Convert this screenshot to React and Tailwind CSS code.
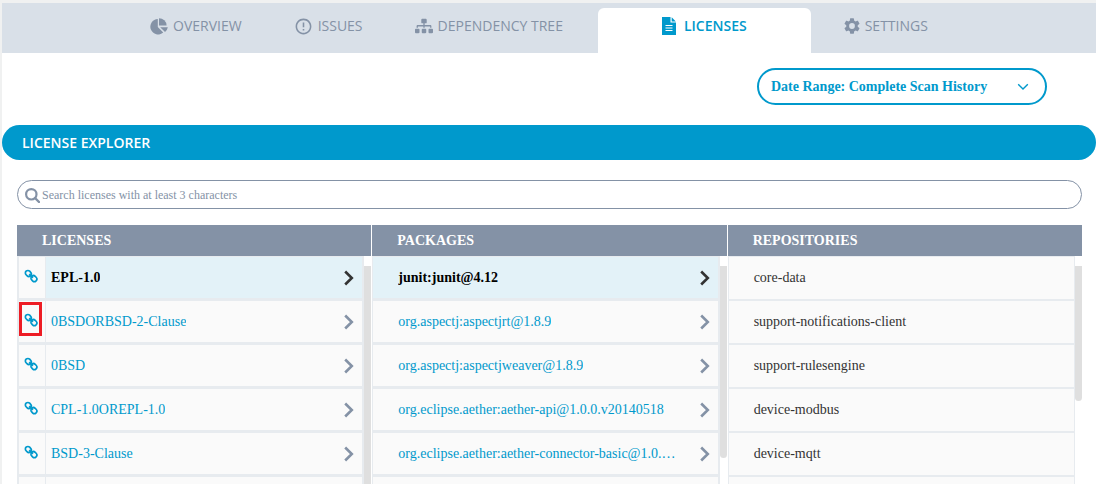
import { useState } from "react";
import { FaSitemap } from "react-icons/fa";
import { MdErrorOutline } from "react-icons/md";

function PieIcon() {
  return (
    <svg viewBox="0 0 18 17" className="h-[17px] w-[18px]" fill="currentColor" aria-hidden="true">
      <path d="M7.8 1V9L13.2 14.4A7.7 7.7 0 1 1 7.8 1Z" />
      <path d="M9 0.2A7.6 7.6 0 0 1 16.6 7.6H9Z" />
      <path d="M10.2 9.2H17.8A7.6 7.6 0 0 1 15 14Z" />
    </svg>
  );
}

function GearIcon() {
  return (
    <svg viewBox="2.2 2 19.6 20" className="size-4" fill="currentColor" aria-hidden="true">
      <path d="M19.14 12.94c.04-.3.06-.61.06-.94 0-.32-.02-.64-.07-.94l2.03-1.58a.49.49 0 0 0 .12-.61l-1.92-3.32a.488.488 0 0 0-.59-.22l-2.39.96c-.5-.38-1.03-.7-1.62-.94l-.36-2.54a.484.484 0 0 0-.48-.41h-3.84c-.24 0-.43.17-.47.41l-.36 2.54c-.59.24-1.13.57-1.62.94l-2.39-.96a.488.488 0 0 0-.59.22L2.74 8.87c-.12.21-.08.47.12.61l2.03 1.58c-.05.3-.09.63-.09.94s.02.64.07.94l-2.03 1.58a.49.49 0 0 0-.12.61l1.92 3.32c.12.22.37.29.59.22l2.39-.96c.5.38 1.03.7 1.62.94l.36 2.54c.05.24.24.41.48.41h3.84c.24 0 .44-.17.47-.41l.36-2.54c.59-.24 1.13-.56 1.62-.94l2.39.96c.22.08.47 0 .59-.22l1.92-3.32a.49.49 0 0 0-.12-.61zM12 15.6A3.6 3.6 0 1 1 12 8.4a3.6 3.6 0 0 1 0 7.2z" />
    </svg>
  );
}

function DocumentIcon() {
  return (
    <svg viewBox="0 0 14 18" className="h-[18px] w-[14px]" fill="currentColor" aria-hidden="true">
      <path d="M0 0H8.5V5.5H14V18H0Z" />
      <path d="M9.7 0.3L13.8 4.4H9.7Z" />
      <path d="M3.5 8.5H10.5M3.5 11H10.5M3.5 13.5H10.5" stroke="white" strokeWidth="1.1" />
    </svg>
  );
}

function SearchIcon() {
  return (
    <svg viewBox="0 0 15 15" className="mt-[2px] size-[15px] shrink-0" fill="none" stroke="currentColor" aria-hidden="true">
      <circle cx="6.3" cy="6.3" r="5.2" strokeWidth="2.2" />
      <path d="M10 10L14 14" strokeWidth="2.4" strokeLinecap="round" />
    </svg>
  );
}

function LinkIcon() {
  return (
    <svg viewBox="0 0 14 14" className="size-[14px]" fill="none" stroke="currentColor" strokeWidth="1.7" aria-hidden="true">
      <rect x="1.2" y="1.9" width="6.2" height="5" rx="2.5" transform="rotate(45 4.3 4.4)" />
      <rect x="6.8" y="7.1" width="6.2" height="5" rx="2.5" transform="rotate(45 9.9 9.6)" />
      <path d="M5.2 5.2L8.9 8.8" />
    </svg>
  );
}

function Chevron() {
  return (
    <svg viewBox="0 0 10 16" className="h-4 w-[10px] shrink-0" fill="none" stroke="currentColor" strokeWidth="2.6" aria-hidden="true">
      <path d="M1.2 1.5L7.8 8L1.2 14.5" />
    </svg>
  );
}

const tabs = [
  { name: "OVERVIEW", icon: <PieIcon /> },
  { name: "ISSUES", icon: <MdErrorOutline size={19} /> },
  { name: "DEPENDENCY TREE", icon: <FaSitemap size={18} /> },
  { name: "LICENSES", icon: <DocumentIcon />, active: true },
  { name: "SETTINGS", icon: <GearIcon /> },
];

const licenses = ["EPL-1.0", "0BSDORBSD-2-Clause", "0BSD", "CPL-1.0OREPL-1.0", "BSD-3-Clause", ""];
const packages = [
  "junit:junit@4.12",
  "org.aspectj:aspectjrt@1.8.9",
  "org.aspectj:aspectjweaver@1.8.9",
  "org.eclipse.aether:aether-api@1.0.0.v20140518",
  "org.eclipse.aether:aether-connector-basic@1.0.…",
  "",
];
const repositories = ["core-data", "support-notifications-client", "support-rulesengine", "device-modbus", "device-mqtt", ""];

function Column({ title, thumb, children }) {
  return (
    <section className="flex min-w-0 flex-1 flex-col">
      <h3 className="h-[31px] shrink-0 bg-[#8492a6] pl-[25px] text-sm leading-[31px] font-bold text-white">{title}</h3>
      <div className="flex min-h-0 flex-1 overflow-hidden">
        <ul className="min-w-0 flex-1">{children}</ul>
        <div className="w-[7px] shrink-0 pt-[10px]">
          <div className={`rounded-b bg-[#dfdfdf] ${thumb}`} />
        </div>
      </div>
    </section>
  );
}

function SelectRow({ label, selected, onSelect, link, marked }) {
  return (
    <li className={`flex h-11 border-t border-r-2 border-b-2 border-[#e7ebef] bg-[#fafafa] ${link ? "border-l-2" : "border-l"}`}>
      {link && (
        <div className="flex w-[27px] shrink-0 items-start border-r border-[#e7ebef]">
          <a
            href="#license"
            aria-label={`Open ${label}`}
            className={`mt-px flex h-[34px] w-[23px] items-center justify-center border-3 pt-[2px] text-[#0099cc] ${marked ? "border-[#ed1c24]" : "border-transparent"}`}
          >
            <LinkIcon />
          </a>
        </div>
      )}
      <button
        type="button"
        onClick={onSelect}
        className={`flex min-w-0 flex-1 items-center justify-between pr-2 text-left text-sm ${link ? "pl-[5px]" : "pl-[25px]"} ${selected ? "bg-[#e3f2f8] font-bold text-black" : "text-[#0099cc]"}`}
      >
        <span className="truncate">{label}</span>
        <span className={selected ? "text-[#333333]" : "text-[#8492a6]"}>
          <Chevron />
        </span>
      </button>
    </li>
  );
}

export default function App() {
  const [license, setLicense] = useState(0);
  const [pkg, setPkg] = useState(0);

  return (
    <div className="flex h-screen flex-col overflow-hidden border-t-3 border-l-2 border-[#f0f1f1] bg-white font-['Liberation_Serif',serif]">
      <nav className="flex h-[50px] shrink-0 bg-[#d9e0e8] pl-[122px] font-['Open_Sans',sans-serif] text-sm">
        {tabs.map((tab) => (
          <a
            key={tab.name}
            href="#tab"
            className={`flex items-center whitespace-nowrap ${tab.active ? "mr-[7px] ml-[9px] mt-[5px] gap-2 rounded-t-md bg-white px-[64px] pb-[9px] font-semibold text-[#0099cc]" : "gap-[5px] px-[26px] pb-1 text-[#8492a6]"}`}
          >
            {tab.icon}
            {tab.name}
          </a>
        ))}
      </nav>

      <div className="flex shrink-0 justify-end pt-[15px] pr-[49px] pb-5">
        <button type="button" className="flex h-[37px] w-[290px] items-center justify-between rounded-full border-2 border-[#0099cc] pr-4 pl-3 text-sm font-bold text-[#0099cc]">
          Date Range: Complete Scan History
          <svg viewBox="0 0 12 8" className="h-2 w-3" fill="none" stroke="currentColor" strokeWidth="1.4" aria-hidden="true">
            <path d="M1.2 1.2L6 6L10.8 1.2" />
          </svg>
        </button>
      </div>

      <h2 className="h-[35px] shrink-0 rounded-full bg-[#0099cc] pl-5 font-['Open_Sans',sans-serif] text-sm leading-[35px] font-semibold text-white">
        LICENSE EXPLORER
      </h2>

      <main className="flex min-h-0 flex-1 flex-col pt-5 pr-[14px] pl-[15px]">
        <label className="flex h-[29px] shrink-0 items-center gap-[2px] rounded-full border border-[#8492a6] pl-[7px] text-[#8492a6]">
          <SearchIcon />
          <input
            type="text"
            aria-label="Search licenses"
            placeholder="Search licenses with at least 3 characters"
            className="min-w-0 flex-1 bg-transparent text-xs outline-none placeholder:text-[#8492a6]"
          />
        </label>

        <div className="mt-4 flex min-h-0 flex-1 gap-px">
          <Column title="LICENSES" thumb="h-[400px]">
            {licenses.map((name, i) => (
              <SelectRow key={i} label={name} link marked={i === 1} selected={license === i} onSelect={() => setLicense(i)} />
            ))}
          </Column>
          <Column title="PACKAGES" thumb="h-[192px]">
            {packages.map((name, i) => (
              <SelectRow key={i} label={name} selected={pkg === i} onSelect={() => setPkg(i)} />
            ))}
          </Column>
          <Column title="REPOSITORIES" thumb="h-[135px]">
            {repositories.map((name, i) => (
              <li key={i} className="flex h-11 items-center border border-[#e7ebef] bg-[#fafafa] pl-[25px] text-sm text-[#333333]">
                {name}
              </li>
            ))}
          </Column>
        </div>
      </main>
    </div>
  );
}
